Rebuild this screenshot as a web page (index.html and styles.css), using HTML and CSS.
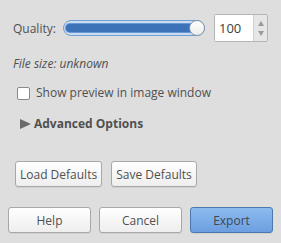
FILE: index.html
```html
<!DOCTYPE html>
<html>
<head>
    <title>Export Image as JPEG</title>
    <link rel="stylesheet" href="styles.css">
</head>
<body>
    <div class="dialog">
        <div class="quality-row">
            <span class="label">Quality:</span>
            <div class="slider">
                <div class="fill"></div>
                <div class="knob"></div>
            </div>
            <div class="spin">
                <span class="spin-value">100</span>
                <div class="spin-arrows">
                    <span class="arrow up"></span>
                    <span class="arrow down"></span>
                </div>
            </div>
        </div>

        <div class="filesize">File size: unknown</div>

        <label class="check-row">
            <span class="checkbox"></span>
            <span>Show preview in image window</span>
        </label>

        <div class="expander">
            <span class="triangle"></span>
            <span>Advanced Options</span>
        </div>

        <div class="defaults">
            <button class="btn small">Load Defaults</button>
            <button class="btn small">Save Defaults</button>
        </div>

        <div class="actions">
            <button class="btn">Help</button>
            <button class="btn">Cancel</button>
            <button class="btn primary">Export</button>
        </div>
    </div>
</body>
</html>
```

FILE: styles.css
```css
body {
    margin: 0;
    background: #dedede;
    font-family: "Open Sans", "DejaVu Sans", sans-serif;
    font-size: 12px;
    color: #505050;
}
.dialog {
    width: 281px;
    height: 243px;
    box-sizing: border-box;
    padding: 14px 8px 0 8px;
}
.quality-row {
    display: flex;
    align-items: center;
    height: 28px;
    padding-left: 5px;
}
.label {
    width: 50px;
}
.slider {
    position: relative;
    width: 140px;
    height: 14px;
    border: 1px solid #6f9fd4;
    border-radius: 8px;
    background: #c9dcf1;
}
.fill {
    position: absolute;
    left: 2px;
    right: 8px;
    top: 3px;
    height: 8px;
    border-radius: 4px;
    background: #3c73b8;
    box-shadow: 0 0 0 1px #6a98d2;
}
.knob {
    position: absolute;
    right: -1px;
    top: -1px;
    width: 14px;
    height: 14px;
    border: 1px solid #8096ad;
    border-radius: 50%;
    background: linear-gradient(#ffffff, #ececec);
}
.spin {
    display: flex;
    margin-left: 9px;
    height: 28px;
    box-sizing: border-box;
    border: 1px solid #b4b4b4;
    border-radius: 2px;
}
.spin-value {
    width: 34px;
    padding-left: 4px;
    background: #fff;
    line-height: 26px;
    font-size: 13px;
    color: #404040;
}
.spin-arrows {
    width: 13px;
    display: flex;
    flex-direction: column;
    justify-content: space-between;
    align-items: center;
    padding: 6px 0 5px;
    background: #e6e6e6;
    border-left: 1px solid #d2d2d2;
}
.arrow {
    width: 0;
    height: 0;
    border-left: 3px solid transparent;
    border-right: 3px solid transparent;
}
.arrow.up {
    border-bottom: 5px solid #9a9a9a;
}
.arrow.down {
    border-top: 5px solid #9a9a9a;
}
.filesize {
    font-style: italic;
    margin-top: 14px;
    padding-left: 5px;
    line-height: 16px;
}
.check-row {
    display: flex;
    align-items: center;
    gap: 6px;
    margin-top: 13px;
    padding-left: 9px;
    line-height: 16px;
}
.checkbox {
    width: 11px;
    height: 11px;
    border: 1px solid #8a8a8a;
    border-radius: 2px;
    background: #fff;
}
.expander {
    display: flex;
    align-items: center;
    gap: 3px;
    margin-top: 15px;
    padding-left: 12px;
    font-weight: bold;
    line-height: 16px;
}
.triangle {
    width: 0;
    height: 0;
    border-top: 5px solid transparent;
    border-bottom: 5px solid transparent;
    border-left: 11px solid #6a6a6a;
}
.defaults {
    display: flex;
    gap: 9px;
    margin-top: 29px;
    padding-left: 7px;
}
.btn {
    font-family: inherit;
    font-size: 12px;
    color: #505050;
    height: 26px;
    width: 83px;
    padding: 0;
    border: 1px solid #a8a8a8;
    border-radius: 3px;
    background: linear-gradient(#ffffff, #eeeeee);
    box-shadow: 0 1px 0 rgba(0, 0, 0, 0.06);
}
.btn.small {
    width: auto;
    padding: 0 4px;
}
.actions {
    display: flex;
    gap: 8px;
    margin-top: 20px;
}
.btn.primary {
    border-color: #4b79ad;
    background: linear-gradient(#8dbbf0, #6c9fe0);
    color: #3e4650;
}
```
